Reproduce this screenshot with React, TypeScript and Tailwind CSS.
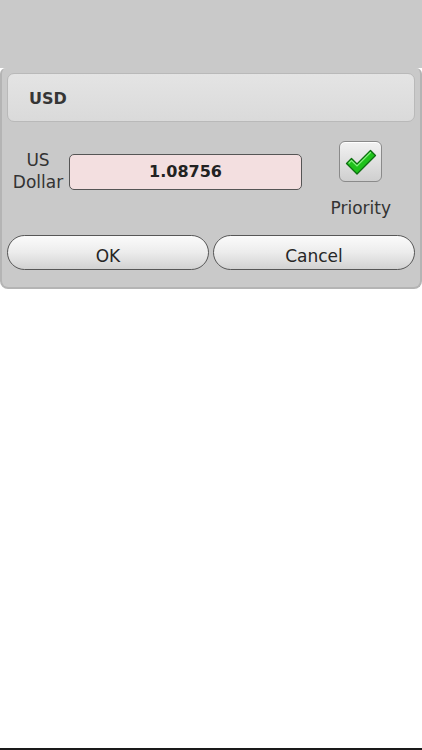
import * as React from 'react'

const FONT = { fontFamily: '"DejaVu Sans", "Liberation Sans", sans-serif' }

function CheckIcon() {
  return (
    <svg width={34} height={30} viewBox="0 0 34 30" aria-hidden="true">
      <path
        d="M2.5 16.5 L7.5 11.5 L13 17 L26.5 3.5 L31.5 8.5 L13 27 Z"
        fill="#1fc21b"
        stroke="#0d6e10"
        strokeWidth={1.3}
        strokeLinejoin="round"
      />
      <path d="M5 16 L7.5 13.5 L13 19 L26.5 5.5" fill="none" stroke="#86ef7f" strokeWidth={1.2} strokeLinecap="round" />
    </svg>
  )
}

function PillButton({ label }: { label: string }) {
  return (
    <button
      type="button"
      className="flex h-[35px] flex-1 items-center justify-center rounded-full border-[1.5px] border-[#575757] bg-gradient-to-b from-[#fbfbfb] via-[#ececec] to-[#d2d2d2] pt-[7px] text-[17px] leading-[20px] text-[#262626]"
    >
      {label}
    </button>
  )
}

export default function App() {
  return (
    <div className="flex h-[750px] w-[422px] flex-col bg-white" style={FONT}>
      <div className="h-[68px] bg-[#c9c9c9]" />

      <div className="rounded-t-[6px] rounded-b-[8px] border-x-2 border-b-2 border-[#b4b4b4] bg-[#c9c9c9] px-[5px] pt-[5px] pb-[17px]">
        {/* title bar */}
        <div className="flex h-[49px] items-center rounded-[7px] border border-[#b9b9b9] bg-gradient-to-b from-[#e4e4e4] to-[#dadada] px-[21px] pt-[3px]">
          <span className="text-[16px] font-bold text-[#353535]">USD</span>
        </div>

        {/* value row */}
        <div className="mt-[19px] flex items-start">
          <div className="mt-[8px] flex w-[62px] flex-col items-center text-[17px] leading-[22px] text-[#333]">
            <span>US</span>
            <span>Dollar</span>
          </div>
          <div className="mt-[13px] flex h-[36px] w-[233px] items-center justify-center rounded-[5px] border border-[#555] bg-[#f3dfe0] text-[16px] font-bold text-[#222]">
            1.08756
          </div>
          <div className="ml-auto mr-[24px] flex flex-col items-center">
            <div className="flex h-[41px] w-[43px] items-center justify-center rounded-[6px] border border-[#8a8a8a] bg-gradient-to-b from-[#f2f2f2] to-[#cfcfcf] shadow-[inset_0_1px_0_#fff]">
              <CheckIcon />
            </div>
            <span className="mt-[14px] text-[17px] text-[#333]">Priority</span>
          </div>
        </div>

        {/* buttons */}
        <div className="mt-[13px] flex gap-[4px]">
          <PillButton label="OK" />
          <PillButton label="Cancel" />
        </div>
      </div>

      <div className="flex-1" />
      <div className="h-[2px] bg-[#1a1a1a]" />
    </div>
  )
}
